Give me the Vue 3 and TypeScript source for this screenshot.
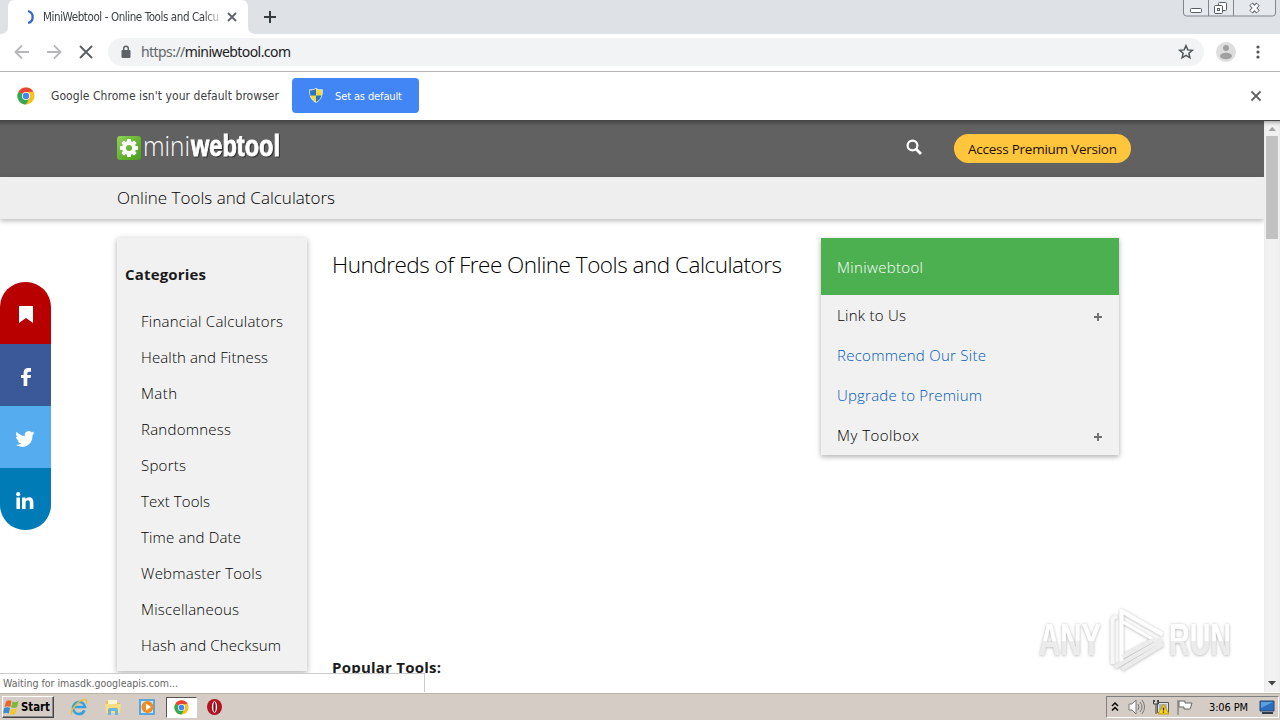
<script setup lang="ts">
const categories: string[] = [
  'Financial Calculators', 'Health and Fitness', 'Math', 'Randomness', 'Sports',
  'Text Tools', 'Time and Date', 'Webmaster Tools', 'Miscellaneous', 'Hash and Checksum',
]
interface MenuRow { label: string; link: boolean; width: number }
const menu: MenuRow[] = [
  { label: 'Link to Us', link: false, width: 69 },
  { label: 'Recommend Our Site', link: true, width: 149 },
  { label: 'Upgrade to Premium', link: true, width: 145 },
  { label: 'My Toolbox', link: false, width: 82 },
]
const categoryWidths: number[] = [142, 127, 36, 90, 45, 69, 100, 121, 98, 140]
const gearTeeth: number[] = [0, 45, 90, 135, 180, 225, 270, 315]
</script>

<template>
  <div class="desktop">
    <header class="tabstrip">
      <svg class="tab-shape" width="264" height="34" viewBox="0 0 264 34"><path d="M0 34Q8 34 8 26V7Q8 0 15 0H241Q248 0 248 7V26Q248 34 256 34Z" fill="#fff" /></svg>
      <div class="tab">
        <svg width="16" height="18" viewBox="0 0 16 18"><path d="M7 3a6.200 6.200 0 0 1 0 12" fill="none" stroke="#3367d6" stroke-width="2.300" /></svg>
        <svg class="tab-title" width="179" height="20"><text x="0" y="14" textLength="176">MiniWebtool - Online Tools and Calcu</text></svg>
        <svg class="tab-close" width="10" height="10" viewBox="0 0 10 10"><path d="m1 1 8 8M9 1 1 9" stroke="#5f6368" stroke-width="1.800" /></svg>
      </div>
      <svg class="new-tab" width="14" height="14" viewBox="0 0 14 14"><path d="M7 1v12M1 7h12" stroke="#333a40" stroke-width="2" /></svg>
      <svg class="window-buttons" width="97" height="18" viewBox="0 0 97 18">
        <path d="M.5 0v13q0 3 3 3h86q3 0 3-3V0" fill="#e5e8ed" stroke="#80868e" />
        <path d="M25.500 0v16M50.500 0v16" stroke="#80868e" />
        <rect x="7.500" y="8.500" width="11" height="4" rx="1" fill="#fff" stroke="#555d66" />
        <rect x="35.500" y="2.500" width="8" height="8" rx="1" fill="#fff" stroke="#555d66" />
        <rect x="31.500" y="5.500" width="8" height="8" rx="1" fill="#fff" stroke="#555d66" />
        <rect x="34.500" y="8.500" width="2" height="2" fill="none" stroke="#555d66" />
        <path d="m68 4 7 8m0-8-7 8" stroke="#555d66" stroke-width="4.500" /><path d="m68.300 4.500 6.400 7m0-7-6.400 7" stroke="#fff" stroke-width="2.600" />
      </svg>
    </header>

    <nav class="toolbar">
      <svg width="96" height="20" viewBox="0 0 96 20" fill="none">
        <path d="M29 10H16m6-6.500L15.500 10l6.500 6.500M47 10h13m-6-6.500 6.500 6.500-6.500 6.500" stroke="#b5b7b9" stroke-width="1.800" />
        <path d="m80 4 12 12M92 4 80 16" stroke="#5a5e62" stroke-width="1.900" />
      </svg>
      <div class="omnibox">
        <svg class="lock" width="10" height="14" viewBox="0 0 10 14"><path d="M2.700 6V3.600a2.300 2.300 0 0 1 4.600 0V6" fill="none" stroke="#5f6368" stroke-width="1.500" /><rect x=".5" y="5" width="9" height="8" rx="1" fill="#5f6368" /></svg>
        <svg class="url" width="160" height="22"><text x="0" y="16" textLength="150"><tspan fill="#62686e">https://</tspan>miniwebtool.com</text></svg>
        <svg class="star" width="16" height="16" viewBox="0 0 16 16"><path d="m8 1.700 1.800 4.200 4.500.4-3.400 3 1 4.500L8 11.400l-3.900 2.400 1-4.500-3.400-3 4.500-.4Z" fill="none" stroke="#50565c" stroke-width="1.500" /></svg>
      </div>
      <svg class="avatar" width="20" height="20" viewBox="0 0 20 20"><circle cx="10" cy="10" r="10" fill="#dedede" /><circle cx="10" cy="6" r="3" fill="#a0a0a0" /><ellipse cx="10" cy="14" rx="6" ry="3.200" fill="#a0a0a0" /></svg>
      <svg class="kebab" width="4" height="16" viewBox="0 0 4 16" fill="#50565c"><circle cx="2" cy="3" r="1.600" /><circle cx="2" cy="8" r="1.600" /><circle cx="2" cy="13" r="1.600" /></svg>
    </nav>

    <section class="infobar">
      <svg class="chrome-logo" width="18" height="18" viewBox="0 0 18 18"><circle cx="9" cy="9" r="8.500" fill="#fbc116" /><path d="M9 9 1.600 4.700A8.500 8.500 0 0 1 16.400 4.700L9 5Z" fill="#ea4335" /><path d="M1.600 4.700A8.500 8.500 0 0 0 9 17.500L12.500 11 9 9Z" fill="#34a853" /><circle cx="9" cy="9" r="4" fill="#fff" /><circle cx="9" cy="9" r="3.200" fill="#4285f4" /></svg>
      <svg class="info-text" width="229" height="22"><text x="0" y="15" textLength="228">Google Chrome isn't your default browser</text></svg>
      <button class="default-button">
        <svg width="14" height="15" viewBox="0 0 14 15"><path d="M7 .5q3 2 6.300 1.200Q14 11 7 14.500 0 11 .7 1.700 4 2.500 7 .5Z" fill="#f9d939" stroke="#d6e8fb" /><path d="M7 1v6.500H1.200L1.100 2.300Q4 2.700 7 1ZM7 7.500h5.500Q11 12 7 14Z" fill="#2875c8" /></svg>
        <svg class="button-text" width="68" height="18"><text x="0" y="13" textLength="67">Set as default</text></svg>
      </button>
      <svg class="info-close" width="12" height="12" viewBox="0 0 12 12"><path d="m1.500 1.500 9 9m0-9-9 9" stroke="#666" stroke-width="2" /></svg>
    </section>

    <main class="viewport">
      <div class="page">
        <header class="site-header">
          <svg class="logo" width="168" height="42" viewBox="0 -7 168 42">
            <defs><linearGradient id="logo-green" x1="0" y1="0" x2="1" y2="1"><stop stop-color="#91d456" /><stop offset=".5" stop-color="#68b532" /><stop offset="1" stop-color="#4d9c20" /></linearGradient></defs>
            <rect x="0" y="1" width="24" height="24" rx="3" fill="url(#logo-green)" />
            <g transform="translate(12 13)"><rect v-for="angle in gearTeeth" :key="angle" x="-2" y="-9" width="4" height="5" rx="1" fill="#fff" :transform="`rotate(${angle})`" /><circle r="5" fill="none" stroke="#fff" stroke-width="4" /></g>
            <text class="logo-light" x="26" y="21" textLength="47" lengthAdjust="spacingAndGlyphs">mini</text>
            <text class="logo-bold" x="74" y="21" textLength="89" lengthAdjust="spacingAndGlyphs">webtool</text>
          </svg>
          <svg class="search" width="16" height="16" viewBox="0 0 16 16" fill="none" stroke="#fff"><circle cx="6.500" cy="6.500" r="4.900" stroke-width="2.200" /><path d="m10 10 5 5" stroke-width="2.900" /></svg>
          <div class="premium"><svg width="151" height="22"><text x="0" y="16" textLength="149">Access Premium Version</text></svg></div>
        </header>
        <div class="breadcrumb"><svg width="222" height="26"><text x="0" y="19" textLength="218">Online Tools and Calculators</text></svg></div>
        <div class="content">
          <aside class="categories">
            <h2><svg width="84" height="24"><text x="0" y="17" textLength="81">Categories</text></svg></h2>
            <ul>
              <li v-for="(item, index) in categories" :key="item"><svg width="150" height="24"><text x="0" y="17" :textLength="categoryWidths[index]">{{ item }}</text></svg></li>
            </ul>
          </aside>
          <section class="tools">
            <h1><svg width="453" height="36"><text x="0" y="25" textLength="450">Hundreds of Free Online Tools and Calculators</text></svg></h1>
            <h3><svg width="112" height="24"><text x="0" y="17" textLength="109">Popular Tools:</text></svg></h3>
          </section>
          <aside class="card">
            <div class="card-title"><svg width="90" height="24"><text x="0" y="17" textLength="86">Miniwebtool</text></svg></div>
            <div v-for="row in menu" :key="row.label" class="card-row" :class="{ link: row.link }">
              <svg width="155" height="24"><text x="0" y="17" :textLength="row.width">{{ row.label }}</text></svg>
              <svg v-if="!row.link" class="plus" width="10" height="10" viewBox="0 0 10 10"><path d="M5 1v8M1 5h8" stroke="#717171" stroke-width="1.900" /></svg>
            </div>
          </aside>
        </div>
      </div>
      <div class="scrollbar">
        <svg width="16" height="16" viewBox="0 0 16 16"><path d="m4.500 10 3.700-4 3.800 4Z" fill="#a0a0a0" /></svg>
        <div class="thumb"></div>
        <svg width="16" height="18" viewBox="0 0 16 18"><path d="m4 7 4 4.500L12 7Z" fill="#444" /></svg>
      </div>

      <div class="share">
        <div class="save"><svg width="16" height="20" viewBox="0 0 16 20"><path d="M1 1h14v17l-7-5-7 5Z" fill="#fff" /></svg></div>
        <div class="facebook"><svg width="14" height="20" viewBox="0 0 14 20"><path d="M12 1v3.700h-2q-1.700 0-1.700 1.600V8H12l-.4 3H8.300v8H4.600v-8H2V8h2.600V5.700Q4.600 1 9.300 1Z" fill="#fff" /></svg></div>
        <div class="twitter"><svg width="20" height="18" viewBox="0 0 24 20"><path d="M23.500 2.600q-1.200.6-2.600.8 1.400-.9 2-2.500-1.300.8-3 1.100A4.700 4.700 0 0 0 11.900 6.300Q6 6 2 1.200-.1 5 3.400 7.500q-1 0-2.100-.6 0 3.800 3.700 4.700-1 .3-2 .1.900 3.100 4.400 3.300-3 2.400-7 2Q12 23.400 19 14q2.200-3.400 2.100-8.900 1.400-1 2.400-2.500Z" fill="#fff" /></svg></div>
        <div class="linkedin"><svg width="20" height="18" viewBox="0 0 20 18" fill="#fff"><circle cx="3.200" cy="2.200" r="2.100" /><path d="M1.400 5.500H5V17H1.400ZM7 5.500h3.500v1.600q1-1.800 3.500-1.900 4.400 0 4.400 5.300V17h-3.600v-6q0-2.800-2-2.800-2.200 0-2.200 2.800v6H7Z" /></svg></div>
      </div>

      <svg class="watermark" width="220" height="76" viewBox="0 0 220 76">
        <defs>
          <linearGradient id="wm" x1="0" y1="0" x2="0" y2="1"><stop offset=".52" stop-color="#fff" /><stop offset=".54" stop-color="#ececec" /></linearGradient>
          <filter id="wm-shadow" x="-5%" y="-10%" width="110%" height="125%"><feDropShadow dx="0" dy="0.500" stdDeviation="1.700" flood-color="#777" flood-opacity=".6" /></filter>
        </defs>
        <g filter="url(#wm-shadow)">
          <text x="8" y="53" textLength="62" lengthAdjust="spacingAndGlyphs">ANY</text>
          <text x="138" y="53" textLength="62" lengthAdjust="spacingAndGlyphs">RUN</text>
          <g fill="none" stroke-width="4" stroke-linejoin="round">
            <path d="M81.500 62V17l4-3" stroke="#f7f7f7" />
            <path d="M90.500 60V9l41 23.500" stroke="#fff" />
            <path d="M92 20l33 19" stroke="#fff" stroke-width="3" />
            <path d="M131 38 84 65M132 42 91 67M91 55l33-18" stroke="#ececec" stroke-width="4" />
          </g>
        </g>
      </svg>

      <div class="status"><svg width="190" height="18"><text x="3" y="13" textLength="175">Waiting for imasdk.googleapis.com...</text></svg></div>
    </main>

    <footer class="taskbar">
      <div class="start">
        <svg width="18" height="17" viewBox="0 0 18 17"><path d="M3 2.500Q6 .5 8.500 2L7.300 8Q4.500 6.500 1.500 8Z" fill="#e9672c" /><path d="M9.500 2.500q3 1.500 6-.5l-1.300 6Q11 9.800 8.200 8.300Z" fill="#7cb83c" /><path d="M1.300 9Q4.500 7.500 7 9l-1.200 5.500Q3 13 0 14.500Z" fill="#3a8ad0" /><path d="M8 9.500q3 1.500 6-.5l-1.300 5.500q-3 2-6 .5Z" fill="#f4c62e" /></svg>
        <svg width="31" height="18"><text x="0" y="13" textLength="29" lengthAdjust="spacingAndGlyphs">Start</text></svg>
      </div>
      <div class="quick">
        <svg width="18" height="18" viewBox="0 0 18 18"><path d="M14.500 12.500Q12.500 16 9 16a6 6 0 1 1 6-7H5" fill="none" stroke="#35a1df" stroke-width="2.700" /><path d="M2 16C-2 15 9 1 15 1.500q3 .3 1 4.500" fill="none" stroke="#edbd37" stroke-width="1.400" /></svg>
        <svg width="18" height="18" viewBox="0 0 18 18"><path d="M2 3h5l1 2h8v10H2Z" fill="#e8bd50" /><path d="M4 2h9v7H4Z" fill="#f8f5d0" /><path d="M1 6h16l-1 9H2Z" fill="#f9de83" /><path d="M4 17v-5q0-2 2-2h6q2 0 2 2v5h-3v-4H7v4Z" fill="#6cb5dd" /></svg>
        <svg width="18" height="18" viewBox="0 0 18 18"><path d="M1 1h16v16H1Z" fill="#5ba5db" /><path d="M3 3h12v12H3Z" fill="#cce9f9" /><circle cx="9.500" cy="9" r="6" fill="#f28b20" /><path d="m8 5.500 5 3.500-5 3.500Z" fill="#fff" /></svg>
        <div class="active-app"><svg width="15" height="15" viewBox="0 0 18 18"><circle cx="9" cy="9" r="8.500" fill="#fbc116" /><path d="M9 9 1.600 4.700A8.500 8.500 0 0 1 16.400 4.700L9 5Z" fill="#ea4335" /><path d="M1.600 4.700A8.500 8.500 0 0 0 9 17.500L12.500 11 9 9Z" fill="#34a853" /><circle cx="9" cy="9" r="4.300" fill="#fff" /><circle cx="9" cy="9" r="3.400" fill="#4285f4" /></svg></div>
        <svg width="16" height="18" viewBox="0 0 16 18"><ellipse cx="7.500" cy="9" rx="7.500" ry="8" fill="#b21320" /><ellipse cx="7.500" cy="9" rx="2.600" ry="5.800" fill="#fff" /><ellipse cx="7.500" cy="9" rx="1.200" ry="5" fill="#82101a" /></svg>
      </div>
      <div class="tray">
        <svg class="chevrons" width="8" height="10" viewBox="0 0 8 10" fill="none" stroke="#000" stroke-width="1.500"><path d="m1 4 3-3 3 3M1 8.500l3-3 3 3" /></svg>
        <svg class="speaker" width="18" height="16" viewBox="0 0 18 16" fill="none"><path d="M1 5h3l4-4v14l-4-4H1Z" fill="#fff" stroke="#777" /><path d="M10 5q2 3 0 6m2-8q4 5 0 10m2-12q5 7 0 14" stroke="#777" /></svg>
        <svg class="network" width="18" height="16" viewBox="0 0 18 16"><path d="M5.500 3.500h11v10h-11Z" fill="#e5e5e5" stroke="#555" /><path d="M7 5h8v6H7Z" fill="#a9b6bd" /><path d="M1.500 1v4h5V1M4 5v10M2.500 1v2m3-2v2" fill="none" stroke="#444" /><path d="m11.500 5 5.500 10H6Z" fill="#f9d41c" stroke="#c49a12" /><path d="M11.500 8.500v3m0 1v1.300" stroke="#333" stroke-width="1.400" /></svg>
        <svg class="flag" width="18" height="16" viewBox="0 0 18 16"><path d="M2 1v15M3 2h6v2h7l-2 6H8V8H3Z" fill="#fff" stroke="#666" /></svg>
        <svg class="clock" width="41" height="16"><text x="0" y="12" textLength="39">3:06 PM</text></svg>
        <svg class="display" width="16" height="14" viewBox="0 0 16 14"><path d="M1 1h14v10H1Z" fill="#2c6ebc" stroke="#2c4774" /><path d="M2 2h12L2 8Z" fill="#58a1df" /><path d="M3 13h11" stroke="#303a4a" stroke-width="2" /></svg>
      </div>
    </footer>
  </div>
</template>

<style>
body { margin: 0; }
</style>

<style scoped>
* { box-sizing: border-box; }
.desktop { position: relative; display: flex; flex-direction: column; width: 1280px; height: 720px; overflow: hidden; background: #fff; font-family: "Open Sans", "Noto Sans", sans-serif; }
svg { display: block; flex: none; overflow: visible; }
svg text { fill: currentColor; }
h1, h2, h3, ul { margin: 0; padding: 0; list-style: none; }
.tabstrip { position: relative; display: flex; height: 34px; flex: none; background: #dee1e6; }
.tab-shape { position: absolute; left: 0; top: 0; }
.tab { position: relative; display: flex; align-items: center; width: 248px; padding-left: 21px; color: #3c4043; }
.tab-title { margin-left: 6px; font: 11.5px "DejaVu Sans Condensed", "DejaVu Sans", sans-serif; mask-image: linear-gradient(90deg, #000 90%, #0003 99%); }
.tab-close { margin-left: 5px; }
.new-tab { margin: 10px 0 0 15px; }
.window-buttons { margin-left: auto; }
.toolbar { display: flex; align-items: center; flex: none; height: 38px; padding-bottom: 1px; border-bottom: 1px solid #b6b6b6; }
.omnibox { display: flex; align-items: center; width: 1096px; height: 28px; margin-left: 12px; border-radius: 14px; background: #f1f3f4; }
.lock { margin-left: 13px; }
.url { margin-left: 10px; color: #202124; font: 14px "Noto Sans", sans-serif; }
.star { margin: 0 10px 0 auto; }
.avatar { margin-left: 12px; }
.kebab { margin-left: 20px; }
.infobar { display: flex; align-items: center; flex: none; height: 49px; border-bottom: 1px solid #484848; }
.chrome-logo { margin-left: 17px; }
.info-text { margin-left: 16px; color: #3c4043; font: 12px "DejaVu Sans Condensed", "DejaVu Sans", sans-serif; }
.default-button { display: flex; align-items: center; width: 127px; height: 35px; margin: 0 0 1px 12px; padding: 0 0 0 17px; border: 0; border-radius: 4px; background: #4285f4; color: #fff; }
.button-text { margin-left: 12px; font: 11px "DejaVu Sans Condensed", "DejaVu Sans", sans-serif; }
.info-close { margin: 0 18px 0 auto; }
.viewport { position: relative; display: flex; flex: none; height: 572px; border-bottom: 1px solid #fff; }
.page { width: 1264px; height: 571px; overflow: hidden; }
.site-header { display: flex; height: 56px; padding-left: 117px; background: linear-gradient(#484848, #616161 5px); }
.logo { margin-top: 7px; }
.logo .logo-light { fill: #fff; font: 300 28px "Open Sans", sans-serif; }
.logo .logo-bold { fill: #fff; font: 700 29px "Liberation Sans", sans-serif; stroke: #fff; stroke-width: .9px; filter: drop-shadow(1px 1px 0 #333); }
.search { margin: 18px 0 0 621px; }
.premium { width: 177px; height: 29px; margin: 13px 0 0 32px; padding: 4px 14px; border-radius: 15px; background: #ffc53d; color: #211000; font-size: 13.5px; }
.breadcrumb { position: relative; height: 42px; padding: 8px 0 0 117px; background: #eee; box-shadow: 0 2px 5px #0004; color: #000; font-size: 17px; font-weight: 340; }
.content { display: flex; align-items: flex-start; height: 473px; padding: 19px 0 0 117px; font-size: 15px; font-weight: 350; }
.categories { width: 190px; height: 433px; background: #f1f1f1; box-shadow: 0 2px 5px #0003, 0 1px 7px #0002; }
.categories h2 { height: 66px; padding: 25px 0 0 8px; font-size: 15px; font-weight: 700; color: #1b1b1b; }
.categories li { height: 36px; padding: 6px 0 0 24px; color: #000; }
.tools { width: 489px; margin-left: 25px; color: #000; }
.tools h1 { height: 418px; padding-top: 10px; font-size: 22.500px; font-weight: 350; }
.tools h3 { font-size: 15px; font-weight: 700; color: #1b1b1b; }
.card { width: 298px; height: 217px; background: #f1f1f1; box-shadow: 0 2px 5px #0004, 0 1px 7px #0001; color: #000; }
.card-title { height: 57px; padding: 18px 16px; background: #4caf50; color: #fff; }
.card-row { display: flex; justify-content: space-between; height: 40px; padding: 9px 16px; }
.card-row.link { color: #0059b5; }
.plus { margin-top: 8px; }
.scrollbar { display: flex; flex-direction: column; justify-content: space-between; width: 16px; height: 571px; background: #f1f1f1; box-shadow: inset 0 4px 4px -3px #0006; }
.thumb { width: 12px; height: 103px; margin: -1px 0 auto 2px; background: #c1c1c1; }
.share { position: absolute; left: 0; top: 161px; width: 51px; overflow: hidden; border-radius: 25px; }
.share > div { display: flex; align-items: center; justify-content: center; height: 62px; padding: 3px 0 0 0; }
.share > div:nth-child(n + 3) { padding-right: 1px; }
.save { background: #b90000; }
.facebook { background: #3b5998; }
.twitter { background: #55acee; }
.linkedin { background: #007bb5; }
.watermark { position: absolute; left: 1031px; top: 481px; font: 700 45px "Liberation Sans", sans-serif; }
.watermark text { fill: url(#wm); }
.status { position: absolute; left: 0; bottom: 0; width: 425px; height: 19px; border: solid #ccc; border-width: 1px 1px 0 0; background: #fff; color: #666; font: 10.500px "DejaVu Sans Condensed", "DejaVu Sans", sans-serif; }
.taskbar { display: flex; align-items: flex-start; flex: none; height: 27px; border-top: 1px solid #b9b4aa; background: #d5cdc5; color: #000; }
.start { display: flex; align-items: center; width: 52px; height: 22px; margin: 2px 0 0 2px; padding-left: 0; border: 1px solid; border-color: #fff #444 #444 #fff; box-shadow: inset -1px -1px #888; font: 700 11.500px "DejaVu Sans Condensed", "DejaVu Sans", sans-serif; }
.quick { display: flex; align-items: center; height: 26px; margin-left: 16px; gap: 16px; }
.active-app { display: flex; align-items: center; justify-content: center; width: 31px; height: 21px; margin: 0 -6px; border: 1px solid; border-color: #555 #fff #fff #555; background: #fff; }
.tray { display: flex; align-items: center; width: 173px; height: 22px; margin: 2px 1px 0 auto; padding-left: 4px; border: 1px solid; border-color: #808080 #fff #fff #808080; font: 11px "DejaVu Sans Condensed", "DejaVu Sans", sans-serif; }
.speaker { margin-left: 9px; }
.network { margin-left: 6px; }
.flag { margin-left: 6px; }
.clock { margin-left: 15px; }
.display { margin-left: 9px; }
</style>
